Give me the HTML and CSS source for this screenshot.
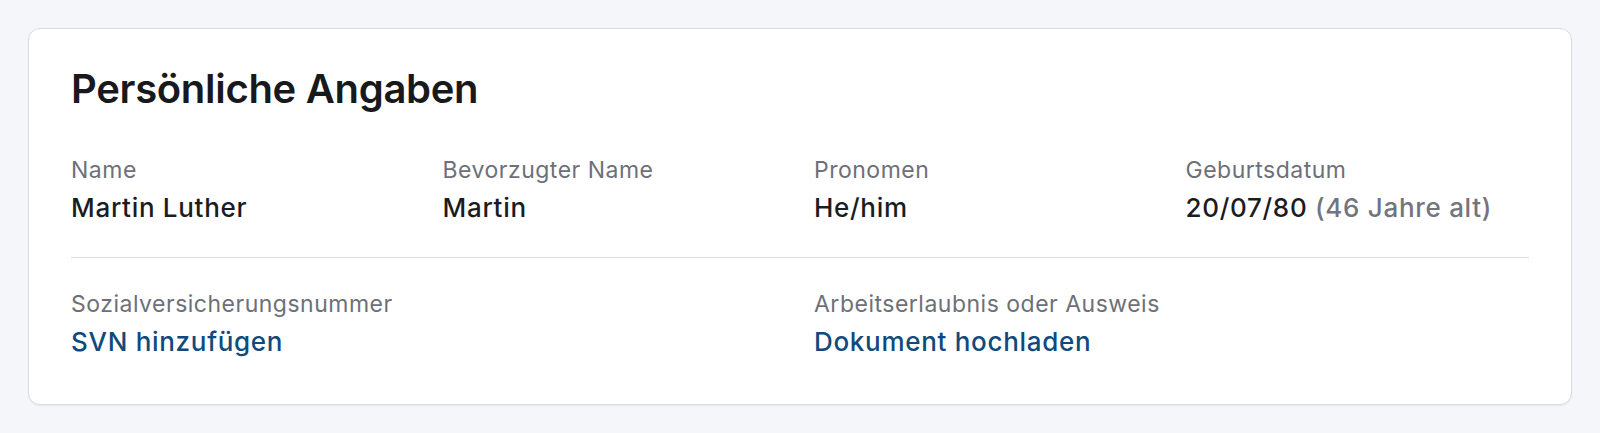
FILE: index.html
```html
<!DOCTYPE html>
<html lang="de">
<head>
<meta charset="utf-8">
<title>Persönliche Angaben</title>
<link rel="stylesheet" href="styles.css">
</head>
<body>
<section class="card">
  <h1 class="title">Persönliche Angaben</h1>
  <div class="grid grid-4">
    <div class="field">
      <div class="label">Name</div>
      <div class="value">Martin Luther</div>
    </div>
    <div class="field">
      <div class="label">Bevorzugter Name</div>
      <div class="value">Martin</div>
    </div>
    <div class="field">
      <div class="label">Pronomen</div>
      <div class="value">He/him</div>
    </div>
    <div class="field">
      <div class="label">Geburtsdatum</div>
      <div class="value">20/07/80 <span class="muted">(46 Jahre alt)</span></div>
    </div>
  </div>
  <hr class="divider">
  <div class="grid grid-2">
    <div class="field">
      <div class="label">Sozialversicherungsnummer</div>
      <a class="link" href="#">SVN hinzufügen</a>
    </div>
    <div class="field">
      <div class="label">Arbeitserlaubnis oder Ausweis</div>
      <a class="link" href="#">Dokument hochladen</a>
    </div>
  </div>
</section>
</body>
</html>
```

FILE: styles.css
```css
* { box-sizing: border-box; }
html, body { margin: 0; padding: 0; }
body {
  background: #f5f6fa;
  font-family: Inter, "Noto Sans", "Liberation Sans", sans-serif;
  padding: 28px 28px;
}
.card {
  background: #ffffff;
  border: 1px solid #dcdde2;
  border-radius: 12px;
  box-shadow: 0 1px 2px rgba(16, 24, 40, 0.06);
  padding: 36px 42px 46px;
}
.title {
  margin: 0;
  font-size: 40px;
  line-height: 48px;
  font-weight: 600;
  color: #18191c;
  letter-spacing: -0.3px;
}
.grid {
  display: grid;
  column-gap: 28px;
}
.grid-4 { grid-template-columns: repeat(4, 1fr); margin-top: 43px; }
.grid-2 { grid-template-columns: repeat(2, 1fr); }
.field { display: flex; flex-direction: column; align-items: flex-start; gap: 8px; }
.label {
  font-size: 23px;
  line-height: 28px;
  letter-spacing: 0.5px;
  color: #6d7078;
}
.value {
  font-size: 26px;
  line-height: 32px;
  font-weight: 500;
  letter-spacing: 0.7px;
  color: #1b1c1f;
}
.muted { color: #72757d; }
.link {
  font-size: 26px;
  line-height: 32px;
  font-weight: 500;
  letter-spacing: 0.7px;
  color: #0f4a7e;
  text-decoration: none;
}
.divider {
  border: 0;
  border-top: 1px solid #dadbe0;
  margin: 33px 0 31.5px;
}
```
